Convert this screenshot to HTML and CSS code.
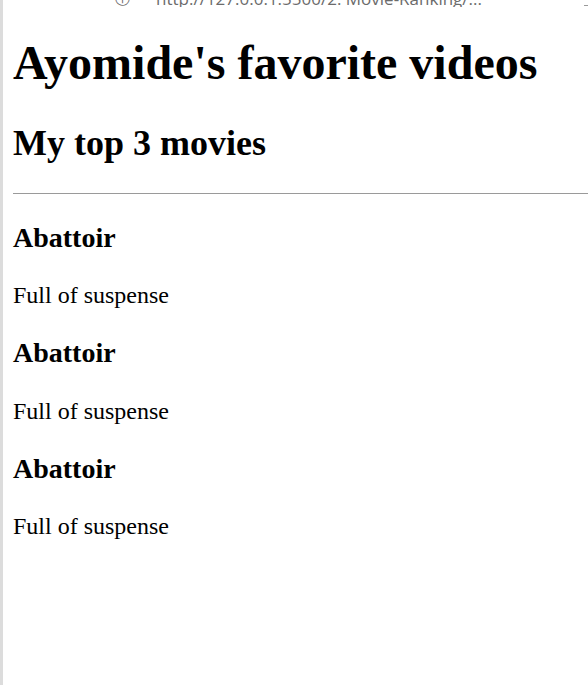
FILE: index.html
```html
<!DOCTYPE html>
<html lang="en">
<head>
<meta charset="utf-8">
<title>Movie Ranking</title>
<link rel="stylesheet" href="styles.css">
</head>
<body>
<div class="frame">
  <div class="urlbar">
    <div class="urlbar-inner">
      <span class="info">&#9432;</span>
      <span class="url">http://127.0.0.1:5500/2. Movie-Ranking/...</span>
      <span class="btn"></span>
    </div>
  </div>
  <main class="page">
    <h1>Ayomide's favorite videos</h1>
    <h2>My top 3 movies</h2>
    <hr class="rule">
    <section class="movie">
      <h3>Abattoir</h3>
      <p>Full of suspense</p>
    </section>
    <section class="movie">
      <h3>Abattoir</h3>
      <p>Full of suspense</p>
    </section>
    <section class="movie">
      <h3>Abattoir</h3>
      <p>Full of suspense</p>
    </section>
  </main>
</div>
</body>
</html>
```
FILE: styles.css
```css
html, body {
  margin: 0;
  padding: 0;
  background: #ffffff;
}
body {
  font-family: "Liberation Serif", "Times New Roman", serif;
  color: #000;
  overflow: hidden;
}
.frame {
  min-height: 685px;
  border-left: 3px solid #dcdcdc;
  box-sizing: border-box;
}
.urlbar {
  height: 7px;
  overflow: hidden;
}
.urlbar-inner {
  display: flex;
  align-items: center;
  margin-top: -11px;
  padding-left: 112px;
  height: 18px;
  font-family: "Open Sans", "Noto Sans", sans-serif;
  font-size: 17px;
  color: #6b6b6b;
  white-space: nowrap;
}
.info {
  font-size: 15px;
  margin-right: 26px;
}
.btn {
  width: 8px;
  height: 14px;
  border-bottom: 1px solid #9a9a9a;
  margin-left: 102px;
}
.page {
  padding: 0 0 0 10px;
}
h1 {
  font-size: 48px;
  font-weight: bold;
  margin: 28px 0 0 0;
  line-height: 1.15;
}
h2 {
  font-size: 36px;
  font-weight: bold;
  margin: 33px 0 0 0;
  line-height: 1.15;
}
.rule {
  margin: 28px -40px 0 0;
  border: 0;
  border-top: 1px solid #9a9a9a;
  height: 0;
}
.movie h3 {
  font-size: 28px;
  font-weight: bold;
  margin: 28px 0 0 0;
  line-height: 1.15;
}
.movie p {
  font-size: 24px;
  margin: 28px 0 0 0;
  line-height: 1.15;
}
```
